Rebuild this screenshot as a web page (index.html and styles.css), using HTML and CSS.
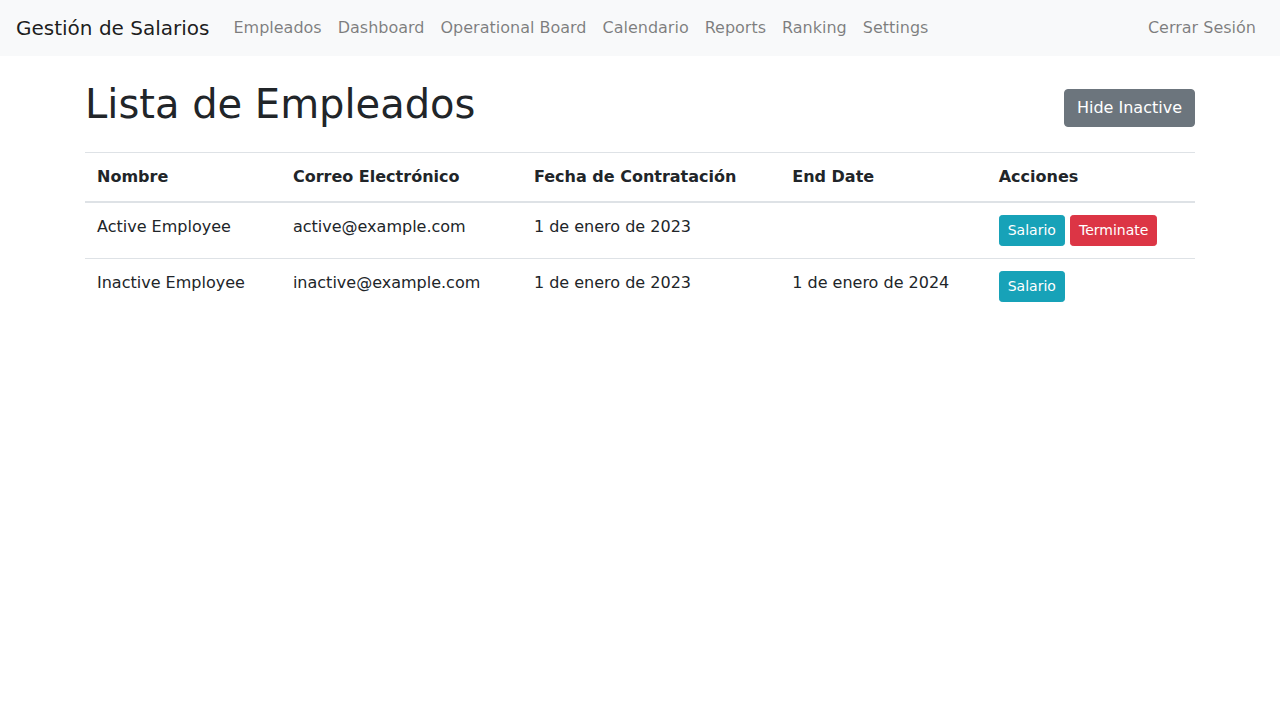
FILE: index.html
```html
<!DOCTYPE html>
<html lang="es">
<head>
<meta charset="utf-8">
<title>Gestión de Salarios</title>
<link rel="stylesheet" href="styles.css">
</head>
<body>
<nav class="navbar">
  <a class="brand" href="#">Gestión de Salarios</a>
  <ul class="nav">
    <li><a class="nav-link" href="#">Empleados</a></li>
    <li><a class="nav-link" href="#">Dashboard</a></li>
    <li><a class="nav-link" href="#">Operational Board</a></li>
    <li><a class="nav-link" href="#">Calendario</a></li>
    <li><a class="nav-link" href="#">Reports</a></li>
    <li><a class="nav-link" href="#">Ranking</a></li>
    <li><a class="nav-link" href="#">Settings</a></li>
  </ul>
  <ul class="nav nav-right">
    <li><a class="nav-link" href="#">Cerrar Sesión</a></li>
  </ul>
</nav>
<main class="container">
  <div class="page-head">
    <h1 class="title">Lista de Empleados</h1>
    <button class="btn btn-secondary">Hide Inactive</button>
  </div>
  <table class="table">
    <thead>
      <tr>
        <th>Nombre</th>
        <th>Correo Electrónico</th>
        <th>Fecha de Contratación</th>
        <th>End Date</th>
        <th>Acciones</th>
      </tr>
    </thead>
    <tbody>
      <tr>
        <td>Active Employee</td>
        <td>active@example.com</td>
        <td>1 de enero de 2023</td>
        <td></td>
        <td><a class="btn btn-sm btn-info" href="#">Salario</a> <button class="btn btn-sm btn-danger">Terminate</button></td>
      </tr>
      <tr>
        <td>Inactive Employee</td>
        <td>inactive@example.com</td>
        <td>1 de enero de 2023</td>
        <td>1 de enero de 2024</td>
        <td><a class="btn btn-sm btn-info" href="#">Salario</a></td>
      </tr>
    </tbody>
  </table>
</main>
</body>
</html>
```

FILE: styles.css
```css
*, *::before, *::after { box-sizing: border-box; }

body {
  margin: 0;
  font-family: "DejaVu Sans", "Liberation Sans", sans-serif;
  font-size: 16px;
  line-height: 1.5;
  color: #212529;
  background: #fff;
}

a { text-decoration: none; }

.navbar {
  display: flex;
  align-items: center;
  padding: 8px 16px;
  background: #f8f9fa;
}

.brand {
  display: inline-block;
  padding: 5px 0;
  margin-right: 16px;
  font-size: 20px;
  line-height: 30px;
  color: rgba(0, 0, 0, 0.9);
  white-space: nowrap;
}

.nav {
  display: flex;
  list-style: none;
  margin: 0;
  padding: 0;
}

.nav-right { margin-left: auto; }

.nav-link {
  display: block;
  padding: 8px;
  color: rgba(0, 0, 0, 0.5);
}

.container {
  max-width: 1140px;
  margin: 24px auto 0;
  padding: 0 15px;
}

.page-head {
  display: flex;
  justify-content: space-between;
  align-items: center;
  margin-bottom: 16px;
}

.title {
  margin: 0 0 8px;
  font-size: 40px;
  font-weight: 500;
  line-height: 1.2;
}

.btn {
  display: inline-block;
  font-family: inherit;
  font-size: 16px;
  line-height: 1.5;
  font-weight: 400;
  padding: 6px 12px;
  border: 1px solid transparent;
  border-radius: 4px;
  color: #fff;
  cursor: pointer;
  vertical-align: middle;
}

.btn-sm {
  padding: 4px 8px;
  font-size: 14px;
  border-radius: 3.2px;
}

.btn-secondary { background: #6c757d; border-color: #6c757d; }
.btn-info { background: #17a2b8; border-color: #17a2b8; }
.btn-danger { background: #dc3545; border-color: #dc3545; }

.table {
  width: 100%;
  border-collapse: collapse;
  color: #212529;
}

.table th,
.table td {
  padding: 12px;
  text-align: left;
  vertical-align: top;
  border-top: 1px solid #dee2e6;
}

.table th { font-weight: 700; }

.table thead th {
  vertical-align: bottom;
  border-bottom: 2px solid #dee2e6;
}
```
